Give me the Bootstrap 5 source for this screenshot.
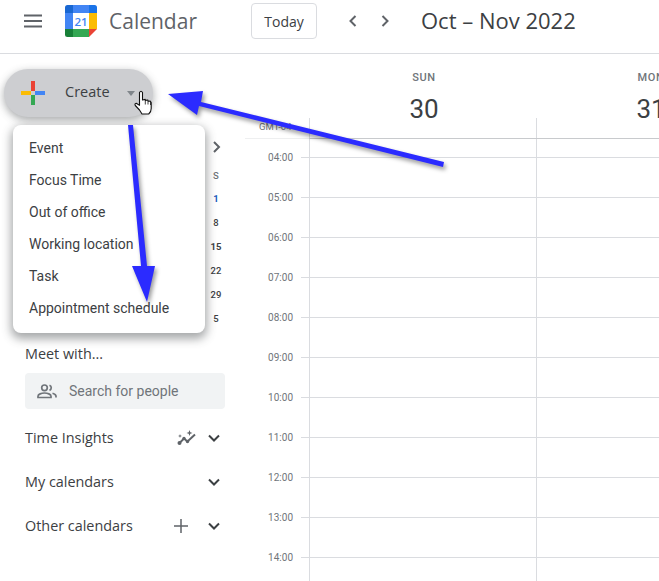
<!DOCTYPE html>
<html lang="en">
<head>
<meta charset="utf-8">
<title>Calendar</title>
<link href="https://cdn.jsdelivr.net/npm/bootstrap@5.3.0/dist/css/bootstrap.min.css" rel="stylesheet">
<style>
html,body{height:581px;overflow:hidden;background:#fff}
body{font-family:"Roboto","Liberation Sans",sans-serif;color:#3c4043}
.gc-page{position:relative;width:659px;height:581px;overflow:hidden}
.gc-head{height:54px;padding-bottom:11px;border-bottom:1px solid #dadce0;color:#3c4043}
.gc-burger{margin-left:23px;width:20px}
.gc-logo{margin-left:22px}
.gc-brand{font-family:"Open Sans",sans-serif;font-size:21px;margin-left:12px;width:142px;color:#5f6368;padding-top:1px}
.gc-today{width:66px;height:36px;padding:0;border:1px solid #dadce0;border-radius:4px;font-family:"Open Sans",sans-serif;font-size:14px;color:#3c4043;background:#fff}
.gc-nav{margin-left:31px;gap:22px}
.gc-range{font-family:"Open Sans",sans-serif;font-size:22px;margin-left:31px;margin-top:-1px;color:#3c4043}
.gc-body{height:527px}
.gc-side{width:245px;flex:none;position:relative}
.gc-create{position:absolute;left:4px;top:15px;width:149px;height:48px;border-radius:24px;background:#cdced1;box-shadow:0 3px 8px rgba(60,64,67,.45);font-family:"Open Sans",sans-serif;font-size:14.5px;font-weight:500;color:#3c4043}
.gc-create-plus{position:absolute;left:17px;top:12px}
.gc-create-label{position:absolute;left:61px;top:12px}
.gc-create-caret{position:absolute;left:123px;top:22px;width:0;height:0;border-left:4.5px solid transparent;border-right:4.5px solid transparent;border-top:5px solid #80868b}
.gc-mini{position:absolute;left:204px;top:81px;width:24px;text-align:center;font-size:9.5px;font-weight:500;color:#3c4043}
.gc-mini-chev{height:24px;margin-bottom:6px}
.gc-mini-s{height:22px;line-height:22px;color:#70757a}
.gc-mini-n{height:24px;line-height:24px}
.gc-mini-n.gc-blue{color:#185abc;font-weight:700}
.gc-mini-n.gc-bold{font-weight:700}
.gc-menu{position:absolute;left:13px;top:71px;width:192px;height:208px;padding:7px 0 0;background:#fff;border-radius:8px;box-shadow:0 4px 10px 2px rgba(60,64,67,.45);z-index:2}
.gc-item{height:32px;line-height:32px;padding-left:16px;font-size:14px;color:#3c4043;white-space:nowrap}
.gc-lower{position:absolute;left:25px;top:289px;width:200px;font-family:"Open Sans",sans-serif}
.gc-meet{font-size:14.4px;font-weight:500;line-height:22px;color:#3c4043}
.gc-search{height:36px;margin-top:8px;background:#f1f3f4;border-radius:4px;padding-left:12px;font-family:"Roboto",sans-serif;font-size:14px;color:#70757a;gap:12px}
.gc-row{height:44px;font-size:14.4px;font-weight:500;color:#3c4043}
.gc-rows{margin-top:7px}
.gc-chev{margin-right:5px}
.gc-tool{margin-right:11px}
.gc-plus{margin-right:19px}
.gc-main{flex:1;min-width:0;overflow:hidden;position:relative}
.gc-daystrip{height:85px}
.gc-gutter{width:64px;flex:none;position:relative}
.gc-gutter-top{border-bottom:1px solid #eeeff0}
.gc-gmt{position:absolute;left:14px;top:66px;font-size:9.5px;color:#70757a;white-space:nowrap}
.gc-dayhead{width:227px;flex:none;text-align:center;position:relative;padding-left:3px;border-bottom:1px solid #c8cacd}
.gc-dayhead::before{content:"";position:absolute;left:0;top:64px;bottom:0;border-left:1px solid #dadce0}
.gc-dow{font-size:11px;font-weight:500;letter-spacing:.6px;color:#70757a;margin-top:17px;line-height:14px}
.gc-dnum{font-size:26px;line-height:36px;color:#3c4043;margin-top:6px}
.gc-hr-lab{height:40px;position:relative}
.gc-hr-first{height:19px}
.gc-hr-lab span{position:absolute;right:16px;bottom:-8px;font-size:10px;line-height:16px;color:#70757a}
.gc-hr-lab i{position:absolute;right:0;bottom:0;width:8px;border-bottom:1px solid #dadce0}
.gc-col{width:227px;flex:none;border-left:1px solid #dadce0}
.gc-cell{height:40px;border-bottom:1px solid #dadce0}
.gc-cell-first{height:19px}
.gc-arrows{position:absolute;left:0;top:0;z-index:5;pointer-events:none}
.gc-arrow-shadow{filter:drop-shadow(2px 3px 2px rgba(0,0,0,.4))}
</style>
</head>
<body>
<div class="gc-page">
  <header class="gc-head d-flex align-items-center">
    <svg class="gc-burger" width="20" height="14" viewBox="0 0 20 14"><path d="M1 1.500h18M1 7h18M1 12.500h18" stroke="#5f6368" stroke-width="2" fill="none"/></svg>
    <svg class="gc-logo" width="32" height="32" viewBox="0 0 32 32">
      <path d="M8 0H2.500Q0 0 0 2.500V8h8z" fill="#1967d2"/>
      <rect x="8" width="16" height="8" fill="#4285f4"/>
      <path d="M24 0h5.500Q32 0 32 2.500V8h-8z" fill="#1a73e8"/>
      <rect y="8" width="8" height="16" fill="#4285f4"/>
      <rect x="24" y="8" width="8" height="16" fill="#fbbc04"/>
      <path d="M0 24h8v8H2.500Q0 32 0 29.500z" fill="#188038"/>
      <rect x="8" y="24" width="16" height="8" fill="#34a853"/>
      <path d="M24 24h8l-8 8z" fill="#ea4335"/>
      <text x="16" y="21" text-anchor="middle" font-family="Open Sans,sans-serif" font-size="11.500" font-weight="600" fill="#4285f4">21</text>
    </svg>
    <div class="gc-brand">Calendar</div>
    <button type="button" class="btn gc-today">Today</button>
    <div class="gc-nav d-flex align-items-center">
      <svg width="10" height="12" viewBox="0 0 10 12"><path d="M7.500 1 2.500 6l5 5" stroke="#5f6368" stroke-width="2" fill="none"/></svg>
      <svg width="10" height="12" viewBox="0 0 10 12"><path d="M2.500 1l5 5-5 5" stroke="#5f6368" stroke-width="2" fill="none"/></svg>
    </div>
    <div class="gc-range">Oct – Nov 2022</div>
  </header>
  <div class="gc-body d-flex">
    <aside class="gc-side">
      <div class="gc-create">
        <svg class="gc-create-plus" width="24" height="24" viewBox="0 0 24 24">
          <rect x="10" y="0" width="4" height="10" fill="#ea4335"/>
          <rect x="14" y="10" width="10" height="4" fill="#4285f4"/>
          <rect x="10" y="14" width="4" height="10" fill="#34a853"/>
          <rect x="0" y="10" width="10" height="4" fill="#fbbc04"/>
        </svg>
        <span class="gc-create-label">Create</span>
        <span class="gc-create-caret"></span>
      </div>
      <div class="gc-mini">
        <div class="gc-mini-chev d-flex align-items-center justify-content-center">
          <svg width="9" height="12" viewBox="0 0 9 12"><path d="M2 1l5 5-5 5" stroke="#5f6368" stroke-width="2" fill="none"/></svg>
        </div>
        <div class="gc-mini-s">S</div>
        <div class="gc-mini-n gc-blue">1</div>
        <div class="gc-mini-n">8</div>
        <div class="gc-mini-n gc-bold">15</div>
        <div class="gc-mini-n">22</div>
        <div class="gc-mini-n">29</div>
        <div class="gc-mini-n">5</div>
      </div>
      <div class="gc-menu">
        <div class="gc-item">Event</div>
        <div class="gc-item">Focus Time</div>
        <div class="gc-item">Out of office</div>
        <div class="gc-item">Working location</div>
        <div class="gc-item">Task</div>
        <div class="gc-item">Appointment schedule</div>
      </div>
      <div class="gc-lower">
        <div class="gc-meet">Meet with...</div>
        <div class="gc-search d-flex align-items-center">
          <svg width="20" height="15" viewBox="0 0 20 15"><g fill="none" stroke="#70757a" stroke-width="1.700"><circle cx="7.500" cy="3.800" r="2.800"/><path d="M1 13.500v-1.300c0-2 3.500-3.200 6.500-3.200s6.500 1.200 6.500 3.200v1.300z"/><path d="M12.500 1.200a2.800 2.800 0 0 1 0 5.200M15.500 9.200c2 .5 3.500 1.500 3.500 3v1.300"/></g></svg>
          <span>Search for people</span>
        </div>
        <div class="gc-rows">
          <div class="gc-row d-flex align-items-center">
            <span class="flex-grow-1">Time Insights</span>
            <svg class="gc-tool" width="20" height="16" viewBox="0 0 20 16"><path d="M2 13.500l5-5 3.500 3L18 4.500" stroke="#5f6368" stroke-width="2" fill="none"/><circle cx="2.500" cy="13" r="2" fill="#5f6368"/><circle cx="7" cy="8.500" r="1.700" fill="#5f6368"/><circle cx="10.500" cy="11.500" r="1.700" fill="#5f6368"/><path d="M12.500 0l.8 2.200 2.200.8-2.200.8-.8 2.200-.8-2.200L9.500 3l2.200-.8zM3 4l.5 1.500 1.500.5-1.500.5L3 8l-.5-1.500L1 6l1.500-.5z" fill="#5f6368"/></svg>
            <svg class="gc-chev" width="12" height="8" viewBox="0 0 12 8"><path d="M1 1.500l5 5 5-5" stroke="#3c4043" stroke-width="2" fill="none"/></svg>
          </div>
          <div class="gc-row d-flex align-items-center">
            <span class="flex-grow-1">My calendars</span>
            <svg class="gc-chev" width="12" height="8" viewBox="0 0 12 8"><path d="M1 1.500l5 5 5-5" stroke="#3c4043" stroke-width="2" fill="none"/></svg>
          </div>
          <div class="gc-row d-flex align-items-center">
            <span class="flex-grow-1">Other calendars</span>
            <svg class="gc-plus" width="16" height="16" viewBox="0 0 16 16"><path d="M8 1v14M1 8h14" stroke="#5f6368" stroke-width="1.500" fill="none"/></svg>
            <svg class="gc-chev" width="12" height="8" viewBox="0 0 12 8"><path d="M1 1.500l5 5 5-5" stroke="#3c4043" stroke-width="2" fill="none"/></svg>
          </div>
        </div>
      </div>
    </aside>
    <main class="gc-main">
      <div class="gc-daystrip d-flex">
        <div class="gc-gutter gc-gutter-top"><span class="gc-gmt">GMT-04</span></div>
        <div class="gc-dayhead"><div class="gc-dow">SUN</div><div class="gc-dnum">30</div></div>
        <div class="gc-dayhead"><div class="gc-dow">MON</div><div class="gc-dnum">31</div></div>
      </div>
      <div class="d-flex">
        <div class="gc-gutter">
          <div class="gc-hr-lab gc-hr-first"><i></i><span>04:00</span></div>
          <div class="gc-hr-lab"><i></i><span>05:00</span></div>
          <div class="gc-hr-lab"><i></i><span>06:00</span></div>
          <div class="gc-hr-lab"><i></i><span>07:00</span></div>
          <div class="gc-hr-lab"><i></i><span>08:00</span></div>
          <div class="gc-hr-lab"><i></i><span>09:00</span></div>
          <div class="gc-hr-lab"><i></i><span>10:00</span></div>
          <div class="gc-hr-lab"><i></i><span>11:00</span></div>
          <div class="gc-hr-lab"><i></i><span>12:00</span></div>
          <div class="gc-hr-lab"><i></i><span>13:00</span></div>
          <div class="gc-hr-lab"><i></i><span>14:00</span></div>
        </div>
        <div class="gc-col">
          <div class="gc-cell gc-cell-first"></div>
          <div class="gc-cell"></div><div class="gc-cell"></div><div class="gc-cell"></div><div class="gc-cell"></div><div class="gc-cell"></div>
          <div class="gc-cell"></div><div class="gc-cell"></div><div class="gc-cell"></div><div class="gc-cell"></div><div class="gc-cell"></div>
          <div class="gc-cell"></div>
        </div>
        <div class="gc-col">
          <div class="gc-cell gc-cell-first"></div>
          <div class="gc-cell"></div><div class="gc-cell"></div><div class="gc-cell"></div><div class="gc-cell"></div><div class="gc-cell"></div>
          <div class="gc-cell"></div><div class="gc-cell"></div><div class="gc-cell"></div><div class="gc-cell"></div><div class="gc-cell"></div>
          <div class="gc-cell"></div>
        </div>
      </div>
    </main>
  </div>
  <svg class="gc-arrows" width="659" height="581" viewBox="0 0 659 581">
    <g class="gc-arrow-shadow" fill="#2b2bff">
      <path d="M168 94 203 91 201 102 444 162 443 167 199 106 197 115z"/>
      <path d="M128 125 133 125 147 266 155 266 147 302 132 266 141 266z"/>
    </g>
    <g fill="#fff" stroke="#111" stroke-width="1.100" stroke-linejoin="round">
      <path d="M139.500 92.500q1.500-2.500 3 0V100l2.700-.6.300 1 2.300-.4.400 1.200 2-.1 1 1.400V108.500q0 3.500-2.500 5.500H142l-2.500-4-4.200-4.500q-1-1.800 .9-2.200l3.300 2z"/>
      <path d="M145.300 100v4.500M148 101v3.500M150.500 102v3" fill="none" stroke-width=".8"/>
    </g>
  </svg>
</div>
</body>
</html>
